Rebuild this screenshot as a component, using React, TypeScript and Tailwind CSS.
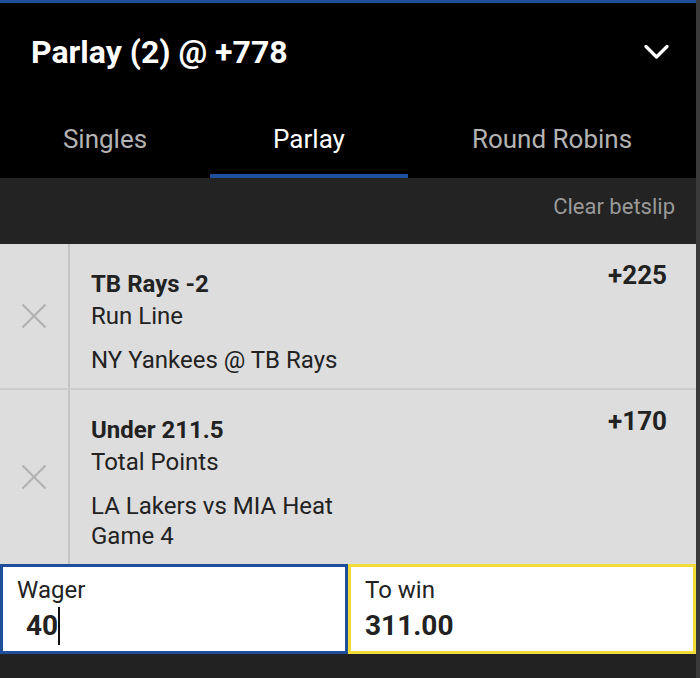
import React from 'react';

const font = { fontFamily: 'Roboto, "Noto Sans", sans-serif' };

const XIcon = () => (
  <svg width="26" height="26" viewBox="0 0 26 26" fill="none" stroke="#b3b3b3" strokeWidth="2.4">
    <path d="M1.5 1.5 L24.5 24.5 M24.5 1.5 L1.5 24.5" />
  </svg>
);

const Chevron = () => (
  <svg width="25" height="16" viewBox="0 0 25 16" fill="none" stroke="white" strokeWidth="3.2" strokeLinecap="round" strokeLinejoin="round">
    <path d="M2 2.5 L12.5 13 L23 2.5" />
  </svg>
);

type Leg = { pick: string; market: string; event: string[]; odds: string };

const legs: Leg[] = [
  { pick: 'TB Rays -2', market: 'Run Line', event: ['NY Yankees @ TB Rays'], odds: '+225' },
  { pick: 'Under 211.5', market: 'Total Points', event: ['LA Lakers vs MIA Heat', 'Game 4'], odds: '+170' },
];

const BetRow = ({ leg, last }: { leg: Leg; last: boolean }) => (
  <div className={`flex bg-[#dddddd] ${last ? '' : 'border-b-2 border-[#cccccc]'}`}>
    <div className="w-[70px] flex items-center justify-center border-r-2 border-[#c4c4c4] shrink-0">
      <XIcon />
    </div>
    <div className="flex-1 flex justify-between pl-[21px] pr-[29px] pt-[24px] pb-[13px]">
      <div className="text-[#222222] text-[24px]">
        <div className="font-bold leading-[32px]">{leg.pick}</div>
        <div className="leading-[32px]">{leg.market}</div>
        <div className="leading-[30px] mt-[13px]">
          {leg.event.map((e) => (
            <div key={e}>{e}</div>
          ))}
        </div>
      </div>
      <div className="text-[26px] font-bold text-[#222222] leading-[30px] -mt-[8px]">{leg.odds}</div>
    </div>
  </div>
);

export default function App() {
  return (
    <div className="w-[700px] h-[678px] bg-[#222222] overflow-hidden flex" style={font}>
      <div className="w-[696px] flex flex-col">
        <div className="bg-black border-t-[3px] border-[#1f4e9a]">
          <div className="h-[97px] flex items-center justify-between pl-[31px] pr-[27px]">
            <div className="text-white text-[32px] font-bold">Parlay (2) @ +778</div>
            <Chevron />
          </div>
          <div className="flex h-[78px] text-[26px]">
            <div className="w-[210px] flex items-center justify-center text-[#b3b3b3] pt-[4px] pb-[3px]">Singles</div>
            <div className="w-[198px] flex items-center justify-center text-white pt-[4px] border-b-[4px] border-[#1f4e9a]">
              Parlay
            </div>
            <div className="flex-1 flex items-center justify-center text-[#b3b3b3] pt-[4px] pb-[3px]">Round Robins</div>
          </div>
        </div>
        <div className="h-[66px] bg-[#232323] flex items-center justify-end pr-[21px] pb-[9px] text-[22px] text-[#9a9a9a]">
          Clear betslip
        </div>
        {legs.map((leg, i) => (
          <BetRow key={leg.pick} leg={leg} last={i === legs.length - 1} />
        ))}
        <div className="flex">
          <div className="w-[348px] h-[90px] bg-white border-[3px] border-[#1f4e9a] pl-[14px] pt-[8px]">
            <div className="text-[24px] text-[#222222] leading-[30px]">Wager</div>
            <div className="flex items-center pl-[9px] mt-[2px]">
              <span className="text-[28px] font-bold text-[#222222] leading-[38px]">40</span>
              <span className="w-[2px] h-[38px] bg-[#111111]" />
            </div>
          </div>
          <div className="flex-1 h-[90px] bg-white border-[3px] border-[#f2dc3a] pl-[14px] pt-[8px]">
            <div className="text-[24px] text-[#222222] leading-[30px]">To win</div>
            <div className="text-[28px] font-bold text-[#222222] leading-[38px] mt-[2px]">311.00</div>
          </div>
        </div>
      </div>
      <div className="w-[4px] h-full bg-[#3a3a3a]" />
    </div>
  );
}
